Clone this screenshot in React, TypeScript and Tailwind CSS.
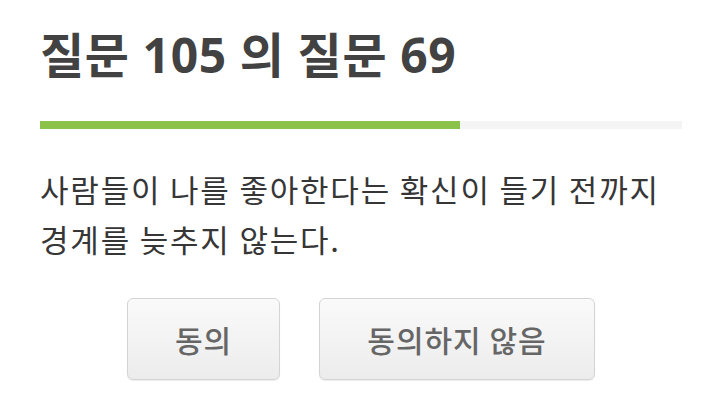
export default function App() {
  const font = { fontFamily: '"Noto Sans CJK KR", "Noto Sans", sans-serif' };
  const titleFont = { fontFamily: '"Open Sans", "Noto Sans CJK KR", sans-serif' };
  return (
    <div className="w-[720px] h-[405px] bg-white overflow-hidden" style={font}>
      <div className="pl-[40px] pr-[38px] pt-[20px]">
        <h1 className="text-[48px] leading-[70px] font-bold tracking-[0.6px] text-[#424242]" style={titleFont}>질문 105 의 질문 69</h1>
        <div className="mt-[31px] h-[8px] bg-[#f4f4f4] flex">
          <div className="h-full bg-[#8bc34a] w-[420px]" />
        </div>
        <p className="mt-[35px] text-[31px] leading-[50px] tracking-[1.8px] text-[#363636]">
          사람들이 나를 좋아한다는 확신이 들기 전까지
          <br />
          경계를 늦추지 않는다.
        </p>
        <div className="mt-[34px] flex gap-[39px] pl-[87px]">
          <button className="w-[153px] h-[82px] rounded-[6px] border border-[#d4d4d4] bg-gradient-to-b from-[#fafafa] to-[#ececec] text-[30px] font-medium text-[#666666] tracking-[1px] shadow-[0_1px_1px_rgba(0,0,0,0.08)]">
            동의
          </button>
          <button className="w-[276px] h-[82px] rounded-[6px] border border-[#d4d4d4] bg-gradient-to-b from-[#fafafa] to-[#ececec] text-[30px] font-medium text-[#666666] tracking-[1px] shadow-[0_1px_1px_rgba(0,0,0,0.08)]">
            동의하지 않음
          </button>
        </div>
      </div>
    </div>
  );
}
